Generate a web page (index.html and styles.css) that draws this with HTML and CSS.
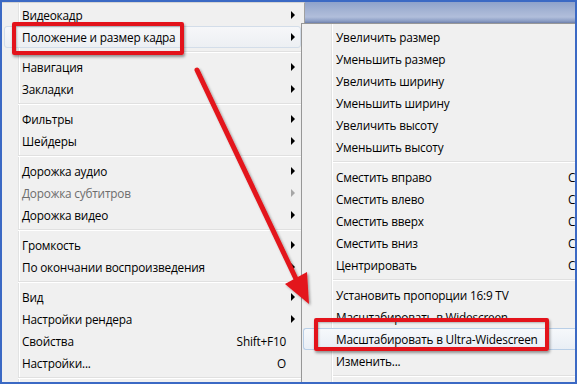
FILE: index.html
```html
<!doctype html>
<html lang="ru">

<head>
    <meta charset="utf-8" />
    <meta name="viewport" content="width=device-width, initial-scale=1">
    <link rel="stylesheet" href="styles.css">
</head>

<body>
    <div class="frame">
        <ul class="menu main">
            <li class="item sub">Видеокадр</li>
            <li class="item sub open">Положение и размер кадра</li>
            <li class="sep"></li>
            <li class="item sub">Навигация</li>
            <li class="item sub">Закладки</li>
            <li class="sep"></li>
            <li class="item sub">Фильтры</li>
            <li class="item sub">Шейдеры</li>
            <li class="sep"></li>
            <li class="item sub">Дорожка аудио</li>
            <li class="item sub disabled">Дорожка субтитров</li>
            <li class="item sub">Дорожка видео</li>
            <li class="sep"></li>
            <li class="item sub">Громкость</li>
            <li class="item sub">По окончании воспроизведения</li>
            <li class="sep"></li>
            <li class="item sub">Вид</li>
            <li class="item sub">Настройки рендера</li>
            <li class="item">Свойства<span class="key">Shift+F10</span></li>
            <li class="item">Настройки...<span class="key">O</span></li>
            <li class="sep"></li>
        </ul>

        <ul class="menu popup">
            <li class="item"><span class="label">Увеличить размер</span></li>
            <li class="item"><span class="label">Уменьшить размер</span></li>
            <li class="item"><span class="label">Увеличить ширину</span></li>
            <li class="item"><span class="label">Уменьшить ширину</span></li>
            <li class="item"><span class="label">Увеличить высоту</span></li>
            <li class="item"><span class="label">Уменьшить высоту</span></li>
            <li class="sep"></li>
            <li class="item"><span class="label">Сместить вправо</span><span class="key">Ctrl+Num 6</span></li>
            <li class="item"><span class="label">Сместить влево</span><span class="key">Ctrl+Num 4</span></li>
            <li class="item"><span class="label">Сместить вверх</span><span class="key">Ctrl+Num 8</span></li>
            <li class="item"><span class="label">Сместить вниз</span><span class="key">Ctrl+Num 2</span></li>
            <li class="item"><span class="label">Центрировать</span><span class="key">Ctrl+Num 5</span></li>
            <li class="sep"></li>
            <li class="item"><span class="label">Установить пропорции 16:9 TV</span></li>
            <li class="item"><span class="label">Масштабировать в Widescreen</span></li>
            <li class="item hover"><span class="label">Масштабировать в Ultra-Widescreen</span></li>
            <li class="item"><span class="label">Изменить...</span></li>
            <li class="sep"></li>
        </ul>

        <div class="mark mark-parent"></div>
        <div class="mark mark-target"></div>

        <svg class="arrow" viewBox="0 0 577 384" width="577" height="384">
            <defs>
                <filter id="shadow" x="-20%" y="-20%" width="140%" height="140%">
                    <feDropShadow dx="1.5" dy="1.5" stdDeviation="1.2" flood-color="#000" flood-opacity="0.35" />
                </filter>
            </defs>
            <g filter="url(#shadow)">
                <line x1="197" y1="70" x2="297" y2="281" stroke="#e3141b" stroke-width="5" stroke-linecap="round" />
                <polygon points="309,304 285,284 307,272" fill="#e3141b" />
            </g>
        </svg>
    </div>
</body>

</html>
```

FILE: styles.css
```css
html {
    font-family: "Open Sans", "Noto Sans", sans-serif;
    font-size: 11.8px;
    letter-spacing: -0.2px;
    color: #000;
}

body {
    margin: 0;
}

.frame {
    position: relative;
    width: 577px;
    height: 384px;
    box-sizing: border-box;
    border: 2px solid #3b69c4;
    overflow: hidden;
    background: linear-gradient(to bottom, #8ea2cb 0, #a5b4d4 9px, #b1bedb 15px, #8b9dc4 19px, #6f82ad 21px) no-repeat 0 0 / 100% 21px, #f0f0f0;
}

.menu {
    list-style: none;
    margin: 0;
    padding: 2px 0;
    background-color: #f0f0f0;
}

.main {
    width: 303px;
    height: 100%;
    box-sizing: border-box;
    border-top: 1px solid #d4d4d4;
    padding-top: 1px;
    border-right: 1px solid #a0a0a0;
    background-image: linear-gradient(to right, transparent 16px, #e2e3e3 16px, #e2e3e3 17px, #fff 17px, #fff 18px, transparent 18px);
}

.popup {
    position: absolute;
    left: 299px;
    top: 21px;
    width: 300px;
    border: 1px solid #979797;
    box-shadow: 2px 2px 3px rgba(0, 0, 0, 0.2);
    background-image: linear-gradient(to right, transparent 29px, #e2e3e3 29px, #e2e3e3 30px, #fff 30px, #fff 31px, transparent 31px);
}

.item {
    display: flex;
    align-items: center;
    height: 22px;
    box-sizing: border-box;
    padding-left: 20px;
    white-space: nowrap;
}

.popup .item {
    padding-left: 34px;
}

.popup .label {
    width: 232px;
    flex: none;
}

.key {
    margin-left: auto;
    margin-right: 18px;
}

.popup .key {
    margin-left: 0;
}

.sub::after {
    content: "";
    margin-left: auto;
    margin-right: 9px;
    border-left: 4px solid #000;
    border-top: 4px solid transparent;
    border-bottom: 4px solid transparent;
}

.disabled {
    color: #6d6d6d;
}

.disabled::after {
    border-left-color: #a6a6a6;
}

.open {
    margin: 0 3px 0 2px;
    padding-left: 17px;
    border: 1px solid #d3dde9;
    border-radius: 3px;
    background: linear-gradient(#f6f7f9, #eceff3);
}

.open::after {
    margin-right: 5px;
}

.hover {
    margin-left: 1px;
    border: 1px solid #b9cfe7;
    border-right: 0;
    border-radius: 3px 0 0 3px;
    background: linear-gradient(#f6f8fb, #e9eef5);
}

.popup .hover {
    padding-left: 32px;
}

.sep {
    height: 8px;
    box-sizing: border-box;
    padding: 3px 2px 0 16px;
}

.sep::before {
    content: "";
    display: block;
    border-top: 1px solid #e0e0e0;
    border-bottom: 1px solid #fff;
}

.popup .sep {
    padding-left: 31px;
    padding-right: 0;
}

.mark {
    position: absolute;
    box-sizing: border-box;
    border: 4px solid #e3131b;
    border-radius: 2px;
    box-shadow: 1px 2px 3px rgba(0, 0, 0, 0.4), inset 1px 1px 2px rgba(0, 0, 0, 0.25);
}

.mark-parent {
    left: 10px;
    top: 20px;
    width: 172px;
    height: 33px;
}

.mark-target {
    left: 312px;
    top: 316px;
    width: 235px;
    height: 33px;
}

.arrow {
    position: absolute;
    left: -2px;
    top: -2px;
    pointer-events: none;
}
```
